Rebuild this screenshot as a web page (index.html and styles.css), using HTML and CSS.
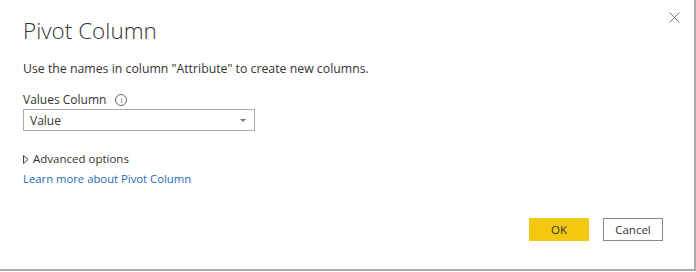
FILE: index.html
```html
<html lang="en">

<head>
    <meta charset="UTF-8">
    <title>Pivot Column</title>
    <link rel="stylesheet" href="styles.css">
</head>

<body>
    <div class="dialog">
        <button class="close-btn" title="Close">
            <svg width="11" height="11" viewBox="0 0 11 11">
                <path d="M0.5 0.5 L10.5 10.5 M10.5 0.5 L0.5 10.5" stroke="#777" stroke-width="1" fill="none" />
            </svg>
        </button>

        <h1>Pivot Column</h1>
        <p class="intro">Use the names in column "Attribute" to create new columns.</p>

        <!-- Values column -->
        <div class="field">
            <label>Values Column
                <span class="info">i</span>
            </label>
            <div class="select">
                <span>Value</span>
                <svg width="6" height="3" viewBox="0 0 6 3">
                    <path d="M0 0 L6 0 L3 3 Z" fill="#777" />
                </svg>
            </div>
        </div>

        <div class="advanced">
            <svg width="6" height="9" viewBox="0 0 6 9">
                <path d="M0.5 0.5 L5 4.5 L0.5 8.5 Z" fill="none" stroke="#444" stroke-width="1" />
            </svg>
            <span>Advanced options</span>
        </div>
        <a class="learn-more" href="#">Learn more about Pivot Column</a>

        <div class="actions">
            <button class="btn ok">OK</button>
            <button class="btn cancel">Cancel</button>
        </div>
    </div>
</body>

</html>
```

FILE: styles.css
```css
body {
    margin: 0;
    width: 696px;
    height: 272px;
    background: #fff;
    font-family: "Open Sans", "Noto Sans", sans-serif;
    color: #333;
}

.dialog {
    position: relative;
    box-sizing: border-box;
    width: 696px;
    height: 271px;
    padding: 15px 23px 0 23px;
    background: #fff;
    border-right: 2px solid #a9a9a9;
    border-bottom: 2px solid #a9a9a9;
}

.close-btn {
    position: absolute;
    top: 6px;
    right: 8px;
    width: 23px;
    height: 23px;
    padding: 0;
    border: none;
    background: none;
    display: flex;
    align-items: center;
    justify-content: center;
}

h1 {
    margin: 0;
    font-size: 22.5px;
    font-weight: 300;
    line-height: 32px;
    color: #333;
}

.intro {
    margin: 13px 0 0 0;
    font-size: 12.3px;
    line-height: 18px;
    color: #333;
}

.field {
    margin-top: 14px;
}

label {
    display: flex;
    align-items: center;
    font-size: 12px;
    line-height: 16px;
    color: #333;
}

.info {
    box-sizing: border-box;
    width: 12px;
    height: 12px;
    margin-left: 9px;
    border: 1px solid #666;
    border-radius: 50%;
    font-size: 8px;
    line-height: 10px;
    text-align: center;
    color: #555;
}

.select {
    box-sizing: border-box;
    width: 232px;
    height: 22px;
    margin-top: 1px;
    padding: 0 8px 0 6px;
    border: 1px solid #ababab;
    display: flex;
    align-items: center;
    justify-content: space-between;
    font-size: 12px;
}

.advanced {
    margin-top: 20px;
    display: flex;
    align-items: center;
    gap: 4px;
    font-size: 11.5px;
    line-height: 16px;
}

.learn-more {
    display: block;
    margin-top: 4px;
    font-size: 11.3px;
    line-height: 16px;
    color: #1e6bb8;
    text-decoration: none;
}

.actions {
    position: absolute;
    right: 31px;
    top: 218px;
    display: flex;
    gap: 14px;
}

.btn {
    box-sizing: border-box;
    width: 60px;
    height: 23px;
    padding: 0;
    font-family: "Open Sans", "Noto Sans", sans-serif;
    font-size: 11.5px;
    color: #333;
}

.ok {
    background: #f2c811;
    border: none;
}

.cancel {
    background: #fff;
    border: 1px solid #8a8a8a;
}
```
